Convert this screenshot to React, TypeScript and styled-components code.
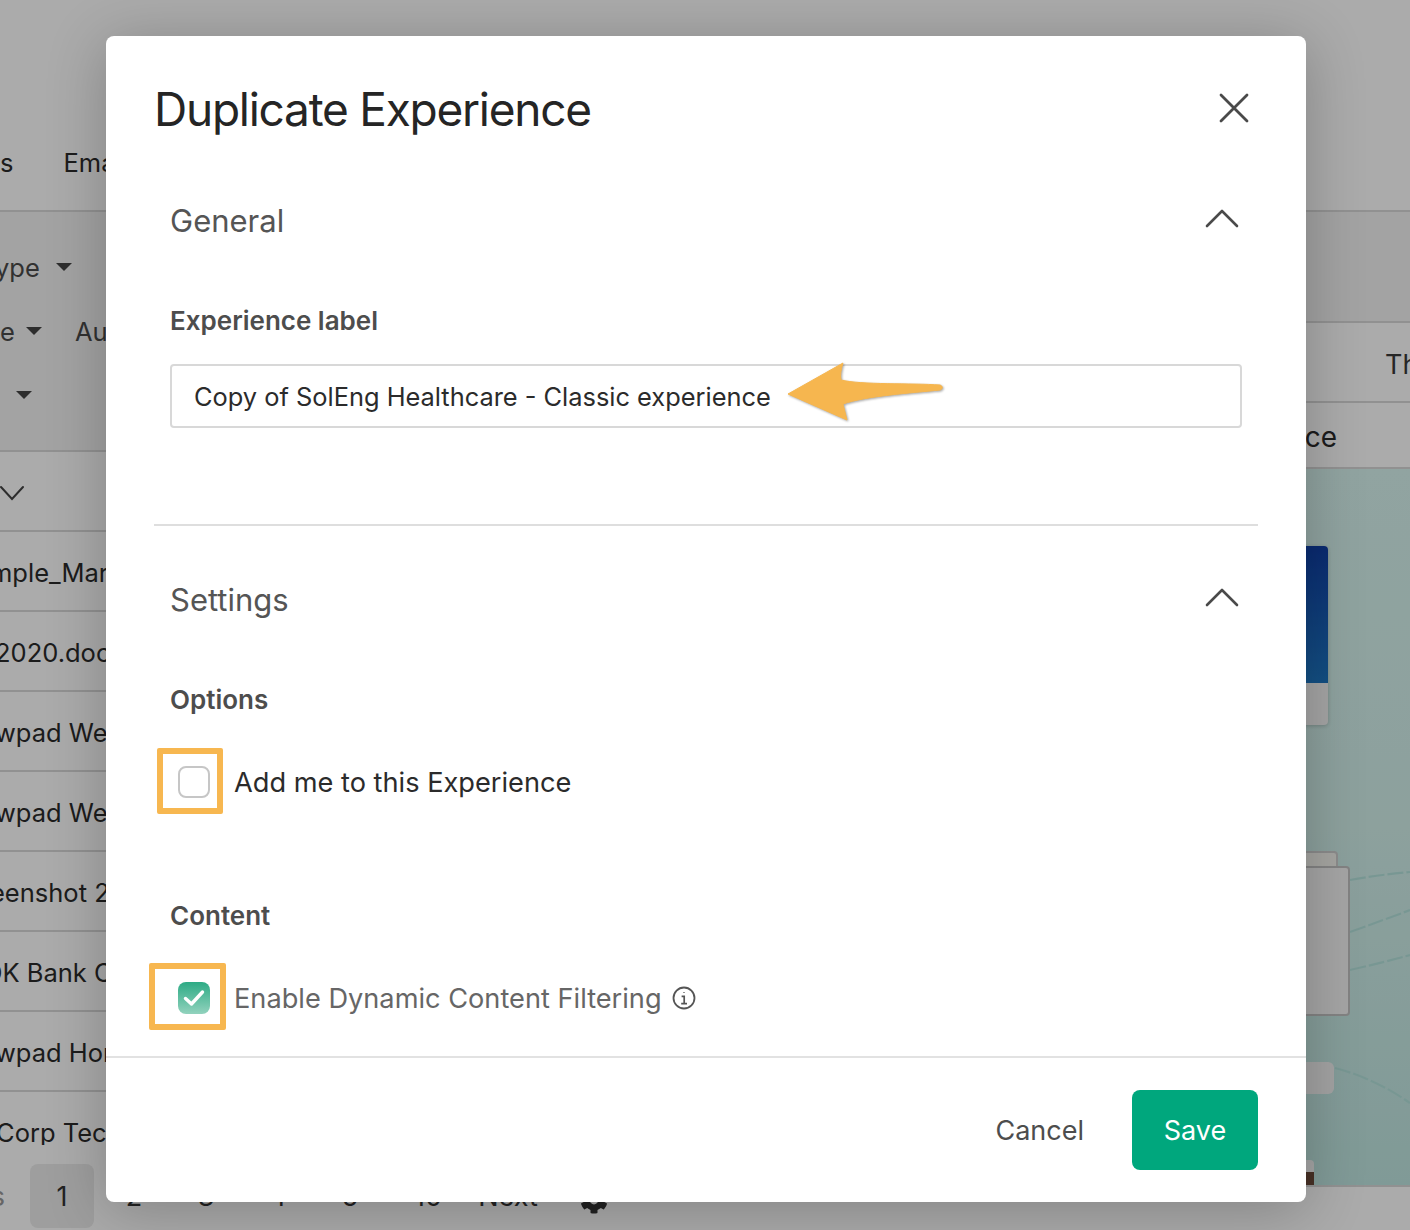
import React from "react";
import styled, { createGlobalStyle } from "styled-components";
import { FaCog } from "react-icons/fa";

const GlobalStyle = createGlobalStyle`
  html, body {
    margin: 0;
    padding: 0;
    background: #fff;
  }
  body {
    font-family: Inter, "Liberation Sans", Arial, sans-serif;
    color: #2b2b2b;
  }
`;

const Page = styled.div`
  position: relative;
  width: 1410px;
  height: 1230px;
  overflow: hidden;
  font-size: 25.5px;
`;

const TopNav = styled.div`
  height: 212px;
  box-sizing: border-box;
  border-bottom: 2px solid #d9d9d9;
  display: flex;
  align-items: center;
  gap: 50px;
  padding-top: 116px;
  line-height: 32px;
  white-space: nowrap;
`;

const Panes = styled.div`
  display: flex;
  height: 1018px;
`;

const LeftPane = styled.div`
  width: 707px;
  flex: none;
  display: flex;
  flex-direction: column;
  overflow: hidden;
`;

const Filters = styled.div`
  height: 240px;
  box-sizing: border-box;
  background: #f4f4f4;
  border-bottom: 2px solid #d9d9d9;
  padding-top: 39px;
  display: flex;
  flex-direction: column;
  gap: 32px;
`;

const FilterRow = styled.div<{ $shift?: number }>`
  display: flex;
  align-items: center;
  height: 32px;
  margin-left: ${(p) => p.$shift ?? 0}px;
  color: #4a4a4a;
  white-space: nowrap;
`;

const Caret = styled.span<{ $gap: number; $after?: number }>`
  width: 0;
  height: 0;
  border-left: 8px solid transparent;
  border-right: 8px solid transparent;
  border-top: 8px solid #444;
  margin-left: ${(p) => p.$gap}px;
  margin-right: ${(p) => p.$after ?? 0}px;
`;

const HeaderCell = styled.div`
  height: 80px;
  box-sizing: border-box;
  border-bottom: 2px solid #d9d9d9;
  padding-top: 4px;
  display: flex;
  align-items: center;
  color: #444;
`;

const FileRow = styled.div`
  height: 80px;
  flex: none;
  box-sizing: border-box;
  border-bottom: 2px solid #d9d9d9;
  padding-top: 2px;
  display: flex;
  align-items: center;
  white-space: nowrap;
  color: #2b2b2b;
`;

const FileName = styled.span<{ $shift?: number }>`
  margin-left: ${(p) => p.$shift ?? 0}px;
`;

const FileList = styled.div`
  height: 613px;
  flex: none;
  overflow: hidden;
`;

const Pager = styled.div`
  flex: 1;
  display: flex;
  align-items: center;
  gap: 8px;
  padding: 17px 0 0 30px;
  position: relative;
  background: #fff;
  font-size: 27px;
`;

const PageButton = styled.span<{ $active?: boolean; $width?: number }>`
  width: ${(p) => p.$width ?? 64}px;
  height: 64px;
  flex: none;
  display: flex;
  align-items: center;
  justify-content: center;
  border-radius: 8px;
  background: ${(p) => (p.$active ? "#ececec" : "transparent")};
  color: #333;
`;

const PrevLabel = styled.span`
  position: absolute;
  right: calc(100% - 5px);
  color: #999;
`;

const GearSlot = styled.span`
  margin-left: 30px;
  display: flex;
  color: #333;
  padding-top: 8px;
`;

const RightPane = styled.div`
  flex: 1;
  display: flex;
  flex-direction: column;
  min-width: 0;
`;

const RightTop = styled.div`
  height: 111px;
  flex: none;
  box-sizing: border-box;
  background: #f4f4f4;
  border-bottom: 2px solid #d9d9d9;
`;

const RightTabs = styled.div`
  height: 80px;
  flex: none;
  box-sizing: border-box;
  border-bottom: 2px solid #d9d9d9;
  display: flex;
  align-items: center;
  padding: 5px 0 0 678px;
  white-space: nowrap;
  color: #3a3a3a;
  font-size: 27px;
`;

const RightTitle = styled.div`
  height: 66px;
  flex: none;
  box-sizing: border-box;
  border-bottom: 2px solid #d9d9d9;
  display: flex;
  align-items: center;
  justify-content: flex-end;
  padding: 4px 73px 0 0;
  font-size: 28px;
`;

const Canvas = styled.div`
  position: relative;
  height: 716px;
  flex: none;
  overflow: hidden;
  background: linear-gradient(180deg, #d8f5f0 0%, #d2f0eb 50%, #bfe6e1 100%);
`;

const CanvasLines = styled.svg`
  position: absolute;
  left: 0;
  top: 0;
`;

const BlueCard = styled.div`
  position: absolute;
  left: 560px;
  top: 77px;
  width: 61px;
  height: 179px;
  border-radius: 4px;
  overflow: hidden;
  background: #f6f6f6;
  box-shadow: 0 1px 4px rgba(0, 0, 0, 0.2);
`;

const BlueFill = styled.div`
  height: 137px;
  background: linear-gradient(180deg, #0f3fa8 0%, #1e78c4 100%);
`;

const BackCard = styled.div`
  position: absolute;
  left: 560px;
  top: 382px;
  width: 67px;
  height: 40px;
  border: 2px solid #cfcfcf;
  border-radius: 4px;
  background: #f6f6f1;
`;

const FrontCard = styled.div`
  position: absolute;
  left: 560px;
  top: 397px;
  width: 79px;
  height: 146px;
  border: 2px solid #c4c4c4;
  border-radius: 4px;
  background: #f6f6f6;
`;

const Pill = styled.div`
  position: absolute;
  left: 560px;
  top: 593px;
  width: 67px;
  height: 32px;
  border-radius: 6px;
  background: #f4f4f4;
`;

const Thumb = styled.div`
  position: absolute;
  left: 560px;
  top: 691px;
  width: 47px;
  height: 25px;
  border-radius: 4px 4px 0 0;
  background: linear-gradient(180deg, #f6f6f6 0 50%, #6b4a3a 50% 100%);
`;

const CanvasFooter = styled.div`
  flex: 1;
  border-top: 2px solid #d9d9d9;
  border-left: 2px solid #d9d9d9;
  margin-left: -2px;
  background: #fff;
`;

const Backdrop = styled.div`
  position: absolute;
  inset: 0;
  background: rgba(0, 0, 0, 0.33);
`;

const Modal = styled.div`
  position: absolute;
  left: 106px;
  top: 36px;
  width: 1200px;
  height: 1166px;
  background: #fff;
  border-radius: 8px;
  box-shadow: 0 8px 60px rgba(0, 0, 0, 0.24);
  display: flex;
  flex-direction: column;
`;

const ModalHeader = styled.div`
  display: flex;
  align-items: center;
  justify-content: space-between;
  padding: 45px 56px 0 48px;
`;

const Title = styled.h1`
  margin: 0;
  font-size: 46px;
  line-height: 56px;
  font-weight: 400;
  letter-spacing: -1.25px;
  color: #252525;
`;

const ModalBody = styled.div`
  flex: 1;
  padding: 0 48px;
`;

const Section = styled.section`
  padding: 0 16px;
`;

const SectionHead = styled.div<{ $top: number }>`
  display: flex;
  align-items: center;
  justify-content: space-between;
  margin-top: ${(p) => p.$top}px;
  padding-right: 3px;
  height: 40px;
`;

const SectionTitle = styled.h2`
  margin: 0;
  font-size: 31px;
  font-weight: 400;
  line-height: 40px;
  color: #555;
`;

const FieldLabel = styled.div<{ $top: number }>`
  margin-top: ${(p) => p.$top}px;
  font-size: 26px;
  line-height: 32px;
  font-weight: 600;
  color: #4d4d4d;
`;

const InputWrap = styled.div`
  position: relative;
  margin-top: 27px;
`;

const TextInput = styled.input`
  display: block;
  width: 100%;
  height: 64px;
  box-sizing: border-box;
  border: 2px solid #d8d8d8;
  border-radius: 4px;
  padding: 0 22px;
  font-family: inherit;
  font-size: 25.4px;
  color: #2b2b2b;
  outline: none;
`;

const Arrow = styled.svg`
  position: absolute;
  left: 616px;
  top: -3px;
`;

const Divider = styled.hr`
  margin: 96px 0 0;
  border: 0;
  border-top: 2px solid #dedede;
`;

const CheckRow = styled.div<{ $top: number }>`
  position: relative;
  display: flex;
  align-items: center;
  gap: 24px;
  margin-top: ${(p) => p.$top}px;
  margin-left: 8px;
  height: 32px;
`;

const Check = styled.span<{ $checked?: boolean }>`
  width: 32px;
  height: 32px;
  flex: none;
  box-sizing: border-box;
  border-radius: 8px;
  display: flex;
  align-items: center;
  justify-content: center;
  border: ${(p) => (p.$checked ? "0" : "2px solid #c6c6c6")};
  background: ${(p) =>
    p.$checked ? "linear-gradient(180deg, #2dab85 0%, #92d2bd 100%)" : "#fff"};
`;

const CheckText = styled.span<{ $muted?: boolean }>`
  font-size: 27.2px;
  line-height: 32px;
  padding-top: 2px;
  color: ${(p) => (p.$muted ? "#666" : "#2b2b2b")};
`;

const Callout = styled.span<{ $left: number; $top: number; $w: number; $h: number }>`
  position: absolute;
  left: ${(p) => p.$left}px;
  top: ${(p) => p.$top}px;
  width: ${(p) => p.$w}px;
  height: ${(p) => p.$h}px;
  box-sizing: border-box;
  border: 6px solid #f7b750;
  border-radius: 2px;
`;

const InfoIcon = styled.svg`
  margin-left: -14px;
  flex: none;
`;

const ModalFooter = styled.div`
  height: 146px;
  box-sizing: border-box;
  border-top: 2px solid #e2e2e2;
  display: flex;
  align-items: center;
  justify-content: flex-end;
  gap: 48px;
  padding: 0 48px;
`;

const CancelButton = styled.button`
  border: 0;
  background: none;
  padding: 0;
  font-family: inherit;
  font-size: 27px;
  color: #4d4d4d;
`;

const SaveButton = styled.button`
  width: 126px;
  height: 80px;
  border: 0;
  border-radius: 8px;
  background: #00a77d;
  color: #fff;
  font-family: inherit;
  font-size: 27px;
`;

const CloseIcon = styled.svg`
  display: block;
  flex: none;
  margin-bottom: 2px;
`;

const ChevronIcon = styled.svg`
  display: block;
  flex: none;
  margin-bottom: 6px;
`;

function ChevronUp() {
  return (
    <ChevronIcon width="34" height="20" viewBox="0 0 34 20">
      <path d="M2 18 L17 3 L32 18" fill="none" stroke="#4a4a4a" strokeWidth="2.6" strokeLinecap="round" strokeLinejoin="round" />
    </ChevronIcon>
  );
}

const files = [
  { name: "mple_Marketing", shift: -10 },
  { name: "2020.docx", shift: -5 },
  { name: "wpad Welcome", shift: -5 },
  { name: "wpad Welcome", shift: -5 },
  { name: "eenshot 2020", shift: -10 },
  { name: "OK Bank Corp", shift: -17 },
  { name: "wpad Home", shift: -5 },
  { name: "Corp Tech", shift: -4 },
];

export default function App() {
  return (
    <Page>
      <GlobalStyle />
      <TopNav>
        <span>s</span>
        <span>Emails</span>
      </TopNav>
      <Panes>
        <LeftPane>
          <Filters>
            <FilterRow $shift={-5}>
              ype
              <Caret $gap={16} />
            </FilterRow>
            <FilterRow>
              e
              <Caret $gap={11} $after={33} />
              Author
            </FilterRow>
            <FilterRow>
              <Caret $gap={16} />
            </FilterRow>
          </Filters>
          <HeaderCell>
            <svg width="24" height="16" viewBox="0 0 24 16">
              <path d="M1 2 L12 14 L23 2" fill="none" stroke="#444" strokeWidth="2" strokeLinecap="round" />
            </svg>
          </HeaderCell>
          <FileList>
            {files.map((f, i) => (
              <FileRow key={i}>
                <FileName $shift={f.shift}>{f.name}</FileName>
              </FileRow>
            ))}
          </FileList>
          <Pager>
            <PrevLabel>Previous</PrevLabel>
            <PageButton $active>1</PageButton>
            <PageButton>2</PageButton>
            <PageButton>3</PageButton>
            <PageButton>4</PageButton>
            <PageButton>5</PageButton>
            <PageButton $width={76}>10</PageButton>
            <PageButton $width={68}>Next</PageButton>
            <GearSlot>
              <FaCog size={28} />
            </GearSlot>
          </Pager>
        </LeftPane>
        <RightPane>
          <RightTop />
          <RightTabs>Theme</RightTabs>
          <RightTitle>Experience</RightTitle>
          <Canvas>
            <CanvasLines width="703" height="716" viewBox="0 0 703 716">
              <g fill="none" stroke="#b4e2dc" strokeWidth="2.2" strokeDasharray="16 3">
                <path d="M643 411 C660 408 680 405 703 403" />
                <path d="M643 463 C665 455 685 448 703 441" />
                <path d="M643 501 C665 496 685 491 703 486" />
                <path d="M628 599 C655 606 680 618 703 634" />
              </g>
            </CanvasLines>
            <BlueCard>
              <BlueFill />
            </BlueCard>
            <BackCard />
            <FrontCard />
            <Pill />
            <Thumb />
          </Canvas>
          <CanvasFooter />
        </RightPane>
      </Panes>
      <Backdrop />
      <Modal>
        <ModalHeader>
          <Title>Duplicate Experience</Title>
          <CloseIcon width="32" height="32" viewBox="0 0 32 32">
            <path d="M3 3 L29 29 M29 3 L3 29" fill="none" stroke="#4a4a4a" strokeWidth="2.8" strokeLinecap="round" />
          </CloseIcon>
        </ModalHeader>
        <ModalBody>
          <Section>
            <SectionHead $top={64}>
              <SectionTitle>General</SectionTitle>
              <ChevronUp />
            </SectionHead>
            <FieldLabel $top={64}>Experience label</FieldLabel>
            <InputWrap>
              <TextInput readOnly value="Copy of SolEng Healthcare - Classic experience" />
              <Arrow width="162" height="64" viewBox="0 0 162 64">
                <path
                  d="M2 33 L57 2 C55 8 54 14 55 19 C75 24 125 22 154 24 C157 25 157 28 154 29 C125 32 80 35 57 43 L61 59 Z"
                  fill="#f6b64f"
                  stroke="#f6b64f"
                  strokeWidth="1"
                  strokeLinejoin="round"
                  style={{ filter: "drop-shadow(1px 1px 1px rgba(0,0,0,.35))" }}
                />
              </Arrow>
            </InputWrap>
          </Section>
          <Divider />
          <Section>
            <SectionHead $top={54}>
              <SectionTitle>Settings</SectionTitle>
              <ChevronUp />
            </SectionHead>
            <FieldLabel $top={64}>Options</FieldLabel>
            <CheckRow $top={50}>
              <Check />
              <CheckText>Add me to this Experience</CheckText>
              <Callout $left={-21} $top={-18} $w={66} $h={66} />
            </CheckRow>
            <FieldLabel $top={102}>Content</FieldLabel>
            <CheckRow $top={50}>
              <Check $checked>
                <svg width="22" height="18" viewBox="0 0 22 18">
                  <path d="M2.5 9.5 L8.5 15 L19.5 3" fill="none" stroke="#fff" strokeWidth="3.4" strokeLinecap="round" strokeLinejoin="round" />
                </svg>
              </Check>
              <CheckText $muted>Enable Dynamic Content Filtering</CheckText>
              <InfoIcon width="24" height="24" viewBox="0 0 24 24">
                <circle cx="12" cy="12" r="10.5" fill="none" stroke="#555" strokeWidth="1.8" />
                <path d="M12 6.2v.9M9.6 10.4h2.6v7M9.2 17.6h5.8" fill="none" stroke="#555" strokeWidth="1.7" />
              </InfoIcon>
              <Callout $left={-29} $top={-19} $w={77} $h={67} />
            </CheckRow>
          </Section>
        </ModalBody>
        <ModalFooter>
          <CancelButton>Cancel</CancelButton>
          <SaveButton>Save</SaveButton>
        </ModalFooter>
      </Modal>
    </Page>
  );
}
